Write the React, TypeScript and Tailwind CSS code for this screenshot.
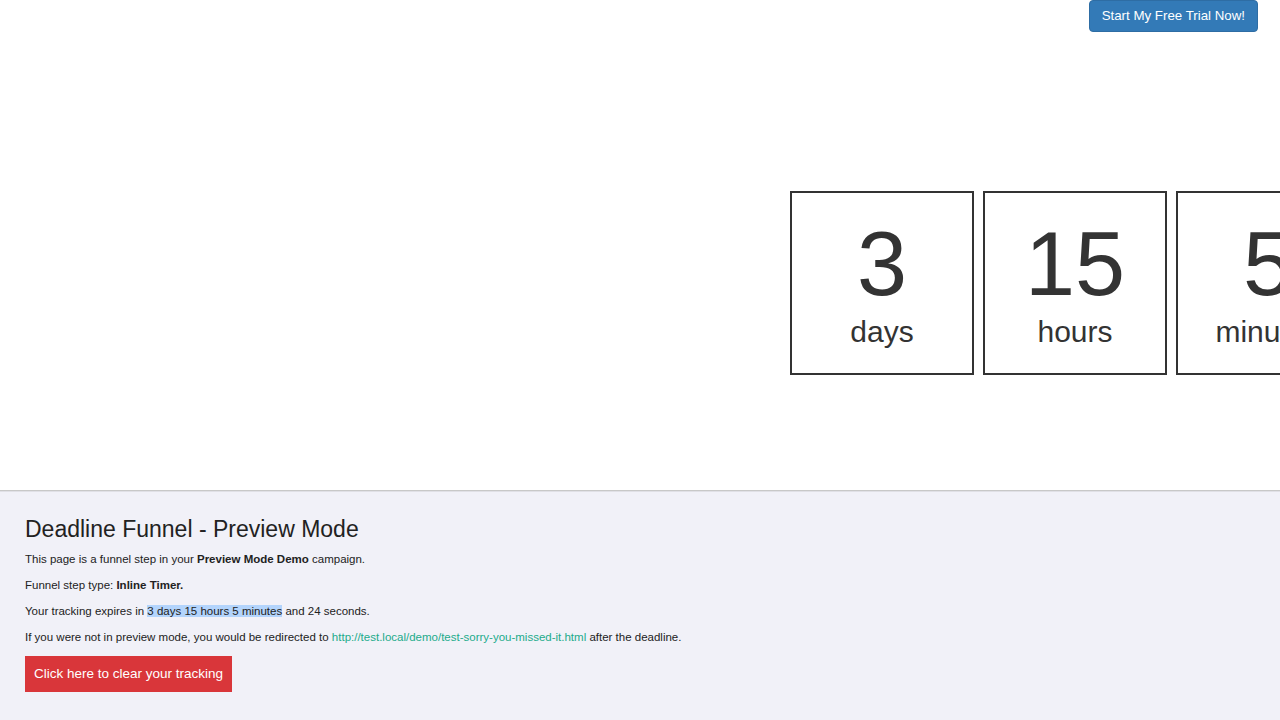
export default function App() {
  const units = [
    { n: "3", l: "days" },
    { n: "15", l: "hours" },
    { n: "5", l: "minutes" },
    { n: "24", l: "seconds" },
  ];
  return (
    <div
      className="w-[1280px] h-[720px] overflow-hidden bg-white flex flex-col"
      style={{ fontFamily: '"Liberation Sans", Arial, sans-serif' }}
    >
      <div className="h-[490px] shrink-0 flex flex-col">
        <div className="flex justify-end pr-[22px]">
          <button className="h-[32px] px-[12px] bg-[#337ab7] border border-[#2e6da4] rounded-[4px] text-white text-[13.3px] leading-none">
            Start My Free Trial Now!
          </button>
        </div>
        <div className="flex gap-[9px] ml-[790px] mt-[159px] w-max">
          {units.map((u) => (
            <div
              key={u.l}
              className="w-[184px] h-[184px] shrink-0 border-2 border-[#333] flex flex-col items-center text-[#333]"
            >
              <div className="text-[90px] leading-[90px] mt-[26px]">{u.n}</div>
              <div className="text-[30px] leading-[34px] mt-[6px]">{u.l}</div>
            </div>
          ))}
        </div>
      </div>
      <div className="h-px bg-[#c8c8c8]" />
      <div className="h-px bg-[#e0e0e6]" />
      <div className="flex-1 bg-[#f1f1f8] px-[25px] pt-[22px] text-[#222]">
        <h3 className="text-[23px] leading-[30px] text-[#222]">Deadline Funnel - Preview Mode</h3>
        <div className="text-[11.5px] leading-[16px] mt-[7px] flex flex-col gap-[10px]">
          <p>
            This page is a funnel step in your <b>Preview Mode Demo</b> campaign.
          </p>
          <p>
            Funnel step type: <b>Inline Timer.</b>
          </p>
          <p>
            Your tracking expires in <span className="bg-[#b3d4fc]">3 days 15 hours 5 minutes</span> and 24 seconds.
          </p>
          <p>
            If you were not in preview mode, you would be redirected to{" "}
            <a className="text-[#1cab8b]">http://test.local/demo/test-sorry-you-missed-it.html</a> after the deadline.
          </p>
        </div>
        <button className="mt-[11px] w-[207px] h-[36px] bg-[#d9363a] text-white text-[13.5px] leading-none">
          Click here to clear your tracking
        </button>
      </div>
    </div>
  );
}
